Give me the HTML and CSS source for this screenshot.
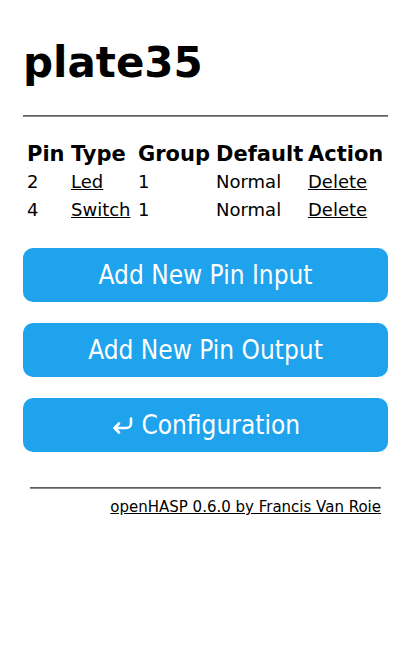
FILE: index.html
```html
<!DOCTYPE html>
<html>
<head>
<meta charset="utf-8">
<title>plate35</title>
<link rel="stylesheet" href="styles.css">
</head>
<body>
<div class="page">
  <h1 class="title">plate35</h1>
  <hr class="rule">
  <table class="pins">
    <colgroup>
      <col class="c-pin"><col class="c-type"><col class="c-group"><col class="c-default"><col class="c-action">
    </colgroup>
    <tr><th>Pin</th><th>Type</th><th>Group</th><th>Default</th><th>Action</th></tr>
    <tr><td>2</td><td><a href="#">Led</a></td><td>1</td><td>Normal</td><td><a href="#">Delete</a></td></tr>
    <tr><td>4</td><td><a href="#">Switch</a></td><td>1</td><td>Normal</td><td><a href="#">Delete</a></td></tr>
  </table>
  <div class="buttons">
    <button class="btn">Add New Pin Input</button>
    <button class="btn">Add New Pin Output</button>
    <button class="btn"><svg class="back" width="23" height="18" viewBox="0 0 23 18" aria-hidden="true"><path d="M20 1.5 V6.5 A4.5 4.5 0 0 1 15.5 11 H3.5 M8 6.5 L3.5 11 L8 15.5" fill="none" stroke="#fff" stroke-width="2.6" stroke-linecap="round" stroke-linejoin="round"/></svg> Configuration</button>
  </div>
  <div class="footer">
    <hr class="rule">
    <div class="credit"><a href="#">openHASP 0.6.0 by Francis Van Roie</a></div>
  </div>
</div>
</body>
</html>
```
FILE: styles.css
```css
html, body {
  margin: 0;
  padding: 0;
  background: #fff;
}
.page {
  padding: 39px 23px 0 23px;
  font-family: "DejaVu Sans", Verdana, sans-serif;
  color: #000;
}
.title {
  margin: 0;
  font-size: 42px;
  line-height: 48px;
  font-weight: bold;
}
.rule {
  margin: 0;
  height: 0;
  border: 0;
  border-top: 1px solid #5f5f5f;
  border-bottom: 1px solid #8a8a8a;
}
.page > .rule {
  margin-top: 28px;
}
.pins {
  margin-top: 22px;
  width: 100%;
  table-layout: fixed;
  border-spacing: 2px;
  border-collapse: separate;
}
.c-pin { width: 42px; }
.c-type { width: 65px; }
.c-group { width: 76px; }
.c-default { width: 90px; }
.c-action { width: auto; }
.pins th, .pins td {
  padding: 1px 1px 1px 2px;
  text-align: left;
  line-height: 24px;
  white-space: nowrap;
  overflow: visible;
}
.pins th {
  font-size: 21px;
  font-weight: bold;
}
.pins td {
  font-size: 18px;
}
.pins a, .credit a {
  color: #000;
  text-decoration: underline;
}
.buttons {
  margin-top: 23px;
  display: flex;
  flex-direction: column;
  gap: 21px;
}
.btn {
  display: block;
  width: 100%;
  height: 54px;
  border: 0;
  border-radius: 10px;
  background: #1fa3ec;
  color: #fff;
  font-family: "DejaVu Sans Condensed", "DejaVu Sans", Tahoma, sans-serif;
  font-stretch: condensed;
  font-size: 26px;
  line-height: 54px;
  padding: 0;
  text-align: center;
}
.back {
  vertical-align: -1px;
}
.footer {
  margin-top: 35px;
  padding: 0 7px;
}
.credit {
  margin-top: 9px;
  text-align: right;
  font-size: 15px;
}
```
